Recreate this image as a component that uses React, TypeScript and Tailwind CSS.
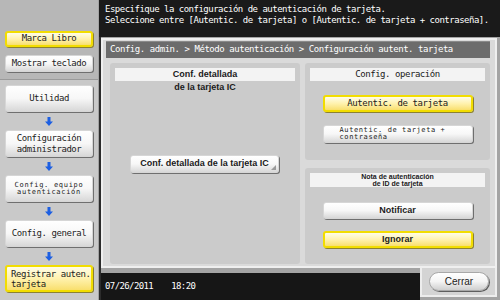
import type { ReactNode } from "react"

const mono = "font-['DejaVu_Sans_Mono','Liberation_Mono',monospace]"
const sans = "font-['Liberation_Sans',Arial,sans-serif]"

const whiteBtn =
  "rounded-[3px] border border-[#d6d6d6] bg-linear-to-b from-white via-[#f7f7f7] to-[#d8d8d8] shadow-[1px_1px_0_#6f6f6f]"
const yellowBtn =
  "rounded-[3px] border-2 border-[#f2dd00] bg-linear-to-b from-[#fffde8] via-[#fff2ae] to-[#f9df6c] shadow-[1px_1px_0_#8c8230]"

function Arrow() {
  return (
    <div className="h-[18px] flex items-center justify-center">
      <svg width="8" height="9" viewBox="0 0 8 9">
        <path d="M2.5 0h3v4.5H8L4 9 0 4.5h2.5z" fill="#1d5fe2" />
      </svg>
    </div>
  )
}

function SideButton({ children, yellow, className = "" }: { children: ReactNode; yellow?: boolean; className?: string }) {
  return (
    <div className={`h-[27px] flex items-center justify-center text-center text-[#1c1c1c] ${mono} ${yellow ? yellowBtn : whiteBtn} ${className}`}>
      {children}
    </div>
  )
}

function ActionButton({ children, yellow, className = "" }: { children: ReactNode; yellow?: boolean; className?: string }) {
  return (
    <div className={`w-[150px] mx-auto flex items-center text-[#1c1c1c] ${yellow ? yellowBtn : whiteBtn} ${className}`}>
      {children}
    </div>
  )
}

export default function App() {
  return (
    <div className="flex w-[500px] h-[300px] overflow-hidden bg-[#9c9c9c]">
      {/* left navigation */}
      <aside className="w-[99px] flex flex-col bg-[#c9c9c9] border-r border-[#a2a2a2]">
        <div className="h-[80px] bg-[#b7b7b7] border-b border-[#9a9a9a] pt-[31px] px-[5px] flex flex-col gap-[8px]">
          <div className={`h-[16px] flex items-center justify-center text-[9px] tracking-[-0.45px] text-[#1c1c1c] ${mono} ${yellowBtn}`}>
            Marca Libro
          </div>
          <div className={`h-[17px] flex items-center justify-center text-[9px] tracking-[-0.45px] text-[#1c1c1c] ${mono} ${whiteBtn}`}>
            Mostrar teclado
          </div>
        </div>
        <div className="pt-[5px] px-[5px] flex flex-col">
          <SideButton className="text-[9px] tracking-[-0.45px]">Utilidad</SideButton>
          <Arrow />
          <SideButton className="text-[9px] tracking-[-0.45px] leading-[11px]">
            Configuración
            <br />
            administrador
          </SideButton>
          <Arrow />
          <SideButton className="text-[7px] tracking-[0.7px] leading-[7px]">
            Config. equipo
            <br />
            autenticación
          </SideButton>
          <Arrow />
          <SideButton className="text-[9px] tracking-[-0.45px]">Config. general</SideButton>
          <Arrow />
          <SideButton yellow className="!justify-start !text-left pl-[4px] text-[9px] tracking-[-0.45px] leading-[10px]">
            Registrar auten.
            <br />
            tarjeta
          </SideButton>
        </div>
      </aside>

      {/* main area */}
      <div className="flex-1 flex flex-col">
        <header className={`h-[37px] bg-[#1a1a1a] pl-[6px] pt-[4px] text-white text-[9px] leading-[11px] tracking-[-0.5px] whitespace-nowrap ${mono}`}>
          <div>Especifique la configuración de autenticación de tarjeta.</div>
          <div>Seleccione entre [Autentic. de tarjeta] o [Autentic. de tarjeta + contraseña].</div>
        </header>

        <div className="flex-1 flex flex-col border-l-2 border-[#2c2c2c] pt-px pr-[3px] bg-[#a4a4a4]">
          <div className="h-[230px] flex flex-col bg-[#dadada] border-2 border-[#efefef] pt-px pl-[3px] pr-[5px] pb-[2px]">
            <div className={`h-[17px] shrink-0 flex items-center pl-[4px] bg-[#6c6c6c] border-t border-[#8a8a8a] text-white text-[9px] tracking-[-0.45px] whitespace-nowrap ${mono}`}>
              Config. admin. &gt; Método autenticación &gt; Configuración autent. tarjeta
            </div>

            <div className="flex-1 mt-[5px] pl-[4px] flex gap-[5px]">
              {/* left card */}
              <section className={`w-[190px] flex flex-col rounded-[3px] bg-[#cbcbcb] ${sans}`}>
                <div className="mx-[5px] mt-[5px] h-[13px] bg-[#f3f3f3] flex items-center justify-center text-[9px] font-bold text-[#1a1a1a]">
                  Conf. detallada
                </div>
                <div className="text-center text-[9px] font-bold leading-[12px] text-[#1a1a1a]">de la tarjeta IC</div>
                <div className={`relative mt-[62px] w-[149px] h-[18px] ml-[20px] flex items-center justify-center text-[9px] font-bold text-[#1a1a1a] ${whiteBtn}`}>
                  Conf. detallada de la tarjeta IC
                  <svg className="absolute right-[2px] bottom-[2px]" width="5" height="5" viewBox="0 0 5 5">
                    <path d="M5 0V5H0z" fill="#9a9a9a" />
                  </svg>
                </div>
              </section>

              {/* right cards */}
              <div className="flex-1 flex flex-col gap-[8px]">
                <section className="h-[97px] flex flex-col rounded-[3px] bg-[#cbcbcb]">
                  <div className={`mx-[5px] mt-[5px] h-[13px] bg-[#f3f3f3] flex items-center justify-center text-[9px] tracking-[-0.45px] text-[#1a1a1a] ${mono}`}>
                    Config. operación
                  </div>
                  <ActionButton yellow className={`mt-[14px] h-[17px] justify-center text-[9px] tracking-[-0.4px] ${mono}`}>
                    Autentic. de tarjeta
                  </ActionButton>
                  <ActionButton className={`mt-[13px] h-[18px] pl-[16px] text-[7px] leading-[7px] tracking-[0.6px] ${mono}`}>
                    <span>
                      Autentic. de tarjeta +
                      <br />
                      contraseña
                    </span>
                  </ActionButton>
                </section>

                <section className={`flex-1 flex flex-col rounded-[3px] bg-[#cbcbcb] ${sans}`}>
                  <div className="mx-[5px] mt-[5px] h-[14px] bg-[#f3f3f3] flex items-center justify-center text-center text-[7px] leading-[7px] font-bold text-[#1a1a1a]">
                    Nota de autenticación
                    <br />
                    de ID de tarjeta
                  </div>
                  <ActionButton className="mt-[15px] h-[17px] justify-center text-[9px] font-bold">Notificar</ActionButton>
                  <ActionButton yellow className="mt-[12px] h-[17px] justify-center text-[9px] font-bold">Ignorar</ActionButton>
                </section>
              </div>
            </div>
          </div>

          {/* bottom status row */}
          <div className="flex-1 flex">
            <div className="w-[319px] flex flex-col">
              <div className="h-[5px] bg-[#a4a4a4]" />
              <div className={`flex-1 bg-[#161616] flex items-center pl-[4px] text-white text-[9px] tracking-[-0.6px] ${mono}`}>
                <span>07/26/2011</span>
                <span className="ml-[18px]">18:20</span>
              </div>
            </div>
            <div className="flex-1 mb-[3px] bg-[#d4d4d4] border-l-2 border-b-2 border-r-2 border-[#ededed] pl-[7px] pt-[4px]">
              <div className={`w-[60px] h-[19px] rounded-full border border-[#a8a8a8] bg-linear-to-b from-white via-[#f4f4f4] to-[#cfcfcf] shadow-[1px_1px_0_#5e5e5e] flex items-center justify-center text-[10px] text-[#222] ${sans}`}>
                Cerrar
              </div>
            </div>
          </div>
        </div>
      </div>
    </div>
  )
}
